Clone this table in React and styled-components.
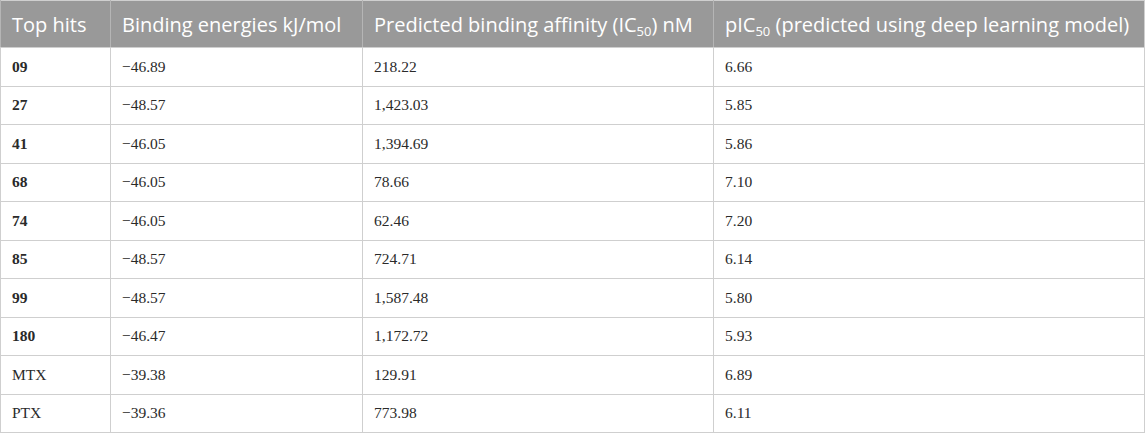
import React from 'react'
import styled, { createGlobalStyle } from 'styled-components'

const GlobalStyle = createGlobalStyle`
  html, body {
    margin: 0;
    padding: 0;
    background: #ffffff;
  }
`

const rows = [
  { hit: '09', bold: true, energy: '\u221246.89', ic50: '218.22', pic50: '6.66' },
  { hit: '27', bold: true, energy: '\u221248.57', ic50: '1,423.03', pic50: '5.85' },
  { hit: '41', bold: true, energy: '\u221246.05', ic50: '1,394.69', pic50: '5.86' },
  { hit: '68', bold: true, energy: '\u221246.05', ic50: '78.66', pic50: '7.10' },
  { hit: '74', bold: true, energy: '\u221246.05', ic50: '62.46', pic50: '7.20' },
  { hit: '85', bold: true, energy: '\u221248.57', ic50: '724.71', pic50: '6.14' },
  { hit: '99', bold: true, energy: '\u221248.57', ic50: '1,587.48', pic50: '5.80' },
  { hit: '180', bold: true, energy: '\u221246.47', ic50: '1,172.72', pic50: '5.93' },
  { hit: 'MTX', bold: false, energy: '\u221239.38', ic50: '129.91', pic50: '6.89' },
  { hit: 'PTX', bold: false, energy: '\u221239.36', ic50: '773.98', pic50: '6.11' },
]

function App() {
  return (
    <>
      <GlobalStyle />
      <Table>
        <colgroup>
          <col style={{ width: 110 }} />
          <col style={{ width: 252 }} />
          <col style={{ width: 351 }} />
          <col />
        </colgroup>
        <thead>
          <tr>
            <Th>Top hits</Th>
            <Th>Binding energies kJ/mol</Th>
            <Th>Predicted binding affinity (IC<sub>50</sub>) nM</Th>
            <Th>pIC<sub>50</sub> (predicted using deep learning model)</Th>
          </tr>
        </thead>
        <tbody>
          {rows.map((r) => (
            <Row key={r.hit}>
              <Td $bold={r.bold}>{r.hit}</Td>
              <Td>{r.energy}</Td>
              <Td>{r.ic50}</Td>
              <Td>{r.pic50}</Td>
            </Row>
          ))}
        </tbody>
      </Table>
    </>
  )
}

const Table = styled.table`
  width: 1145px;
  border-collapse: collapse;
  table-layout: fixed;
  border: 1px solid #cfcfcf;
`

const Th = styled.th`
  height: 47px;
  box-sizing: border-box;
  padding: 0 11px;
  background: #999999;
  color: #ffffff;
  font-family: "Open Sans", "Noto Sans", sans-serif;
  font-size: 20px;
  font-weight: 400;
  text-align: left;
  white-space: nowrap;
  border-left: 1px solid #b5b5b5;
  border-bottom: 1px solid #cfcfcf;

  sub {
    font-size: 13px;
    vertical-align: -4px;
    line-height: 0;
  }
`

const Row = styled.tr`
  height: 38.5px;
`

const Td = styled.td`
  padding: 0 11px;
  border: 1px solid #cfcfcf;
  color: #2a2a2a;
  font-family: "Liberation Serif", "Times New Roman", serif;
  font-size: 15.5px;
  font-weight: ${({ $bold }) => ($bold ? 700 : 400)};
  text-align: left;
`

export default App
